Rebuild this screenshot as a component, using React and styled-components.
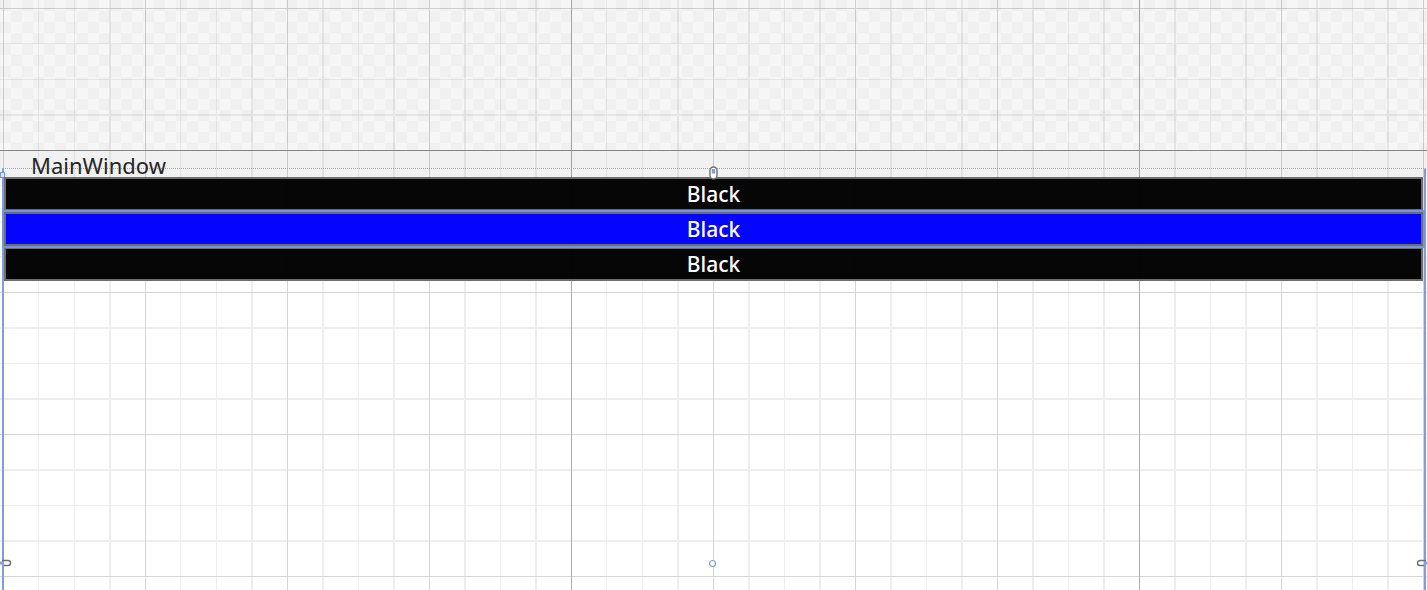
import React from "react"
import styled, { createGlobalStyle } from "styled-components"

const GlobalStyle = createGlobalStyle`
  html, body {
    margin: 0;
    padding: 0;
    background: #ffffff;
  }
  body {
    font-family: "Noto Sans", "Open Sans", sans-serif;
  }
`

const rows = [
  { label: "Black", color: "rgba(0, 0, 0, 0.975)", selected: false },
  { label: "Black", color: "rgba(0, 0, 255, 0.98)", selected: true },
  { label: "Black", color: "rgba(0, 0, 0, 0.975)", selected: false },
]

const App = () => (
  <>
    <GlobalStyle />
    <Canvas>
      <OffPage />
      <Page>
        <Frame>
          <Title>MainWindow</Title>
          <SideHandle />
          <TopHandle width="9" height="14" viewBox="0 0 9 14">
            <rect x="1" y="1" width="7" height="12" rx="3.5" fill="#ffffff" stroke="#707070" strokeWidth="1.4" />
            <rect x="2.8" y="3" width="3.4" height="4.5" fill="#7aa0e8" />
          </TopHandle>
          {rows.map((row, i) => (
            <Row key={i} bg={row.color} selected={row.selected}>
              {row.label}
            </Row>
          ))}
          <CornerLink side="left" width="12" height="10" viewBox="0 0 12 10">
            <path d="M2 2.5 H8 a2.5 2.5 0 0 1 0 5 H4" fill="none" stroke="#707070" strokeWidth="1.4" />
            <rect x="0" y="3.5" width="4" height="3" fill="#7aa0e8" />
          </CornerLink>
          <CornerLink side="right" width="12" height="10" viewBox="0 0 12 10">
            <path d="M10 2.5 H4 a2.5 2.5 0 0 0 0 5 H8" fill="none" stroke="#707070" strokeWidth="1.4" />
            <rect x="8" y="3.5" width="4" height="3" fill="#7aa0e8" />
          </CornerLink>
          <BottomDot width="9" height="9" viewBox="0 0 9 9">
            <circle cx="4.5" cy="4.5" r="3" fill="#ffffff" stroke="#7a9ee0" strokeWidth="1.2" />
          </BottomDot>
        </Frame>
      </Page>
    </Canvas>
  </>
)
export default App

const Canvas = styled.div`
  position: relative;
  width: 1427px;
  height: 590px;
  overflow: hidden;
  display: flex;
  flex-direction: column;
  background:
    linear-gradient(to bottom, transparent 150px, #8e8e8e 150px 151px, transparent 151px),
    linear-gradient(
      to right,
      transparent 571px,
      #ababab 571px 572px,
      transparent 572px 1139px,
      #ababab 1139px 1140px,
      transparent 1140px
    ),
    repeating-linear-gradient(to right, #d6d6d6 0 1px, transparent 1px 142px) 3px 0,
    repeating-linear-gradient(to bottom, #d6d6d6 0 1px, transparent 1px 142px) 0 8px,
    repeating-linear-gradient(to right, #eeeeee 0 1px, transparent 1px 35.5px) 3px 0,
    repeating-linear-gradient(to bottom, #eeeeee 0 1px, transparent 1px 35.5px) 0 8px,
    #ffffff;
`

const OffPage = styled.div`
  height: 150px;
  flex: none;
  background:
    conic-gradient(
      rgba(0, 0, 0, 0.035) 0 25%,
      rgba(0, 0, 0, 0.06) 0 50%,
      rgba(0, 0, 0, 0.035) 0 75%,
      rgba(0, 0, 0, 0.06) 0
    )
    0 0 / 22px 22px;
`

const Page = styled.div`
  flex: 1;
  display: flex;
  flex-direction: column;
  padding-top: 18px;
  background: linear-gradient(to bottom, rgba(0, 0, 0, 0.055) 0 27px, transparent 27px);
`

const Frame = styled.div`
  position: relative;
  flex: 1;
  display: flex;
  flex-direction: column;
  gap: 1px;
  margin: 0 1px 0 2px;
  padding: 8px 1px 0 0;
  border-top: 1px dotted #8aa6de;
  border-left: 2px solid #7d9fe0;
  border-right: 2px solid #7d9fe0;
`

const Title = styled.div`
  position: absolute;
  left: 27px;
  top: -15px;
  font-size: 22px;
  line-height: 22px;
  color: #262626;
  white-space: nowrap;
`

const Row = styled.div`
  box-sizing: border-box;
  height: 34px;
  flex: none;
  display: flex;
  align-items: center;
  justify-content: center;
  border: 2px solid #6d6d6d;
  background: ${props => props.bg};
  box-shadow: ${props => (props.selected ? "0 0 0 2px #6f95de" : "none")};
  position: relative;
  z-index: ${props => (props.selected ? 1 : 0)};
  color: #ffffff;
  font-size: 21px;
  font-weight: 500;
  line-height: 30px;
`

const SideHandle = styled.span`
  position: absolute;
  left: -4px;
  top: 3px;
  width: 3px;
  height: 4px;
  background: #dfe8fb;
  border: 1px solid #6f95de;
`

const TopHandle = styled.svg`
  position: absolute;
  left: 705px;
  top: -3px;
  z-index: 2;
`

const CornerLink = styled.svg`
  position: absolute;
  top: 389px;
  ${props => (props.side === "left" ? "left: -4px;" : "right: -4px;")}
`

const BottomDot = styled.svg`
  position: absolute;
  left: 704px;
  top: 390px;
`
